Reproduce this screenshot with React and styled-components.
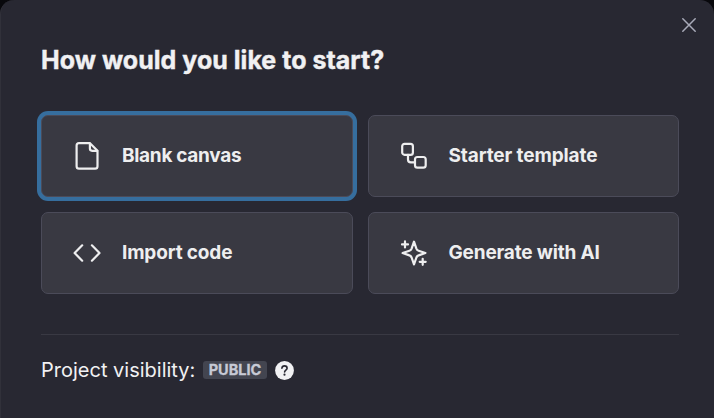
import React from "react";
import styled, { createGlobalStyle } from "styled-components";

const GlobalStyle = createGlobalStyle`
  * { box-sizing: border-box; }
  html, body { margin: 0; background: #08080c; overflow: hidden; }
  body { font-family: Inter, "Liberation Sans", sans-serif; }
`;

const Dialog = styled.section`
  position: relative;
  width: 714px;
  height: 418px;
  padding: 43px 34px 0 40px;
  border-left: 1px solid #31313a;
  border-radius: 14px 14px 0 0;
  background: #282832;
  color: #f1f1f3;
`;

const CloseButton = styled.button`
  position: absolute;
  top: 15px;
  right: 15px;
  width: 20px;
  height: 20px;
  padding: 0;
  border: 0;
  background: none;
  color: #a9abb9;
  svg { display: block; }
`;

const Title = styled.h1`
  margin: 0;
  font-size: 25px;
  line-height: 34px;
  font-weight: 700;
  letter-spacing: 0.02px;
  white-space: nowrap;
  -webkit-text-stroke: 0.4px currentColor;
`;

const Options = styled.div`
  display: grid;
  width: 638px;
  margin-top: 38px;
  grid-template-columns: 312px 311px;
  grid-auto-rows: 82px;
  gap: 15px;
`;

const Option = styled.button`
  display: flex;
  align-items: center;
  gap: ${({ $gap }) => $gap};
  padding: 0 0 0 29px;
  border: 1px solid #4b4b59;
  border-radius: 7px;
  background: #393942;
  color: #eeeeef;
  font: 700 19px/24px Inter, "Liberation Sans", sans-serif;
  letter-spacing: ${({ $tracking }) => $tracking};
  white-space: nowrap;
  outline: none;
  box-shadow: ${({ $selected }) => ($selected ? "0 0 0 4px #366e9e" : "none")};
  svg { flex: none; }
`;

const Footer = styled.footer`
  display: flex;
  align-items: center;
  width: 638px;
  height: 71px;
  margin-top: 40px;
  border-top: 1px solid #393943;
  font-size: 20px;
  line-height: 24px;
`;

const VisibilityLabel = styled.span`
  width: 162px;
  white-space: nowrap;
`;

const Badge = styled.span`
  display: flex;
  align-items: center;
  justify-content: center;
  width: 64px;
  height: 18px;
  border-radius: 3px;
  background: #434550;
  color: #c7cad5;
  font-size: 14.5px;
  line-height: 18px;
  font-weight: 700;
  -webkit-text-stroke: 0.3px currentColor;
`;

const Help = styled.span`
  display: flex;
  margin-left: 8px;
`;

const Icon = ({ children }) => (
  <svg width="32" height="32" viewBox="0 0 32 32" fill="none" stroke="currentColor" strokeWidth="2.2" strokeLinecap="round" strokeLinejoin="round">
    {children}
  </svg>
);

const FileIcon = () => (
  <Icon>
    <path d="M19 3.2H8Q5.6 3.2 5.6 5.6V26.2Q5.6 28.6 8 28.6H24.1Q26.5 28.6 26.5 26.2V10.7Z" />
    <path d="M18.9 3.5V8.6Q18.9 10.8 21.1 10.8H26.2" />
  </Icon>
);

const TemplateIcon = () => (
  <Icon>
    <rect x="4.2" y="3.9" width="10.7" height="10.9" rx="2.4" />
    <rect x="17" y="17" width="10.7" height="10.7" rx="2.4" />
    <path d="M10 14.9V19.6Q10 22.4 12.8 22.4H17" />
  </Icon>
);

const CodeIcon = () => (
  <Icon>
    <path d="M11.2 8.3 3.6 16l7.6 7.7M20.9 8.3l7.6 7.7-7.6 7.7" />
  </Icon>
);

const SparklesIcon = () => (
  <Icon>
    <path d="M16 4.7 18.4 11.6Q19 13.2 20.6 13.7L27.4 16 20.6 18.4Q19 18.9 18.4 20.5L16 27.4 13.6 20.5Q13 18.9 11.4 18.4L4.6 16 11.4 13.7Q13 13.2 13.6 11.6Z" />
    <path d="M7 4.4V10.4M4 7.4H10M24.7 21.8V27.8M21.7 24.8H27.7" />
  </Icon>
);

const options = [
  { label: "Blank canvas", icon: <FileIcon />, selected: true, gap: "19px", tracking: "-0.3px" },
  { label: "Starter template", icon: <TemplateIcon />, gap: "18.5px", tracking: "-0.11px" },
  { label: "Import code", icon: <CodeIcon />, gap: "19px", tracking: "-0.15px" },
  { label: "Generate with AI", icon: <SparklesIcon />, gap: "18.5px", tracking: "-0.17px" },
];

export default function App() {
  return (
    <>
      <GlobalStyle />
      <Dialog>
        <CloseButton aria-label="Close">
          <svg width="20" height="20" viewBox="0 0 20 20" fill="none" stroke="currentColor" strokeWidth="1.5" strokeLinecap="round">
            <path d="M3.8 3.8 16.2 16.2M16.2 3.8 3.8 16.2" />
          </svg>
        </CloseButton>
        <Title>How would you like to start?</Title>
        <Options>
          {options.map(({ label, icon, selected, gap, tracking }) => (
            <Option key={label} $selected={selected} $gap={gap} $tracking={tracking}>
              {icon}
              <span>{label}</span>
            </Option>
          ))}
        </Options>
        <Footer>
          <VisibilityLabel>Project visibility:</VisibilityLabel>
          <Badge>PUBLIC</Badge>
          <Help>
            <svg width="19" height="19" viewBox="0 0 19 19" fill="none">
              <circle cx="9.5" cy="9.5" r="9.4" fill="#f1f1f3" />
              <path d="M6.9 7.3C7 5.8 8 4.9 9.5 4.9s2.6.9 2.6 2.3c0 1.8-2.5 1.9-2.5 3.7" stroke="#282832" strokeWidth="1.6" strokeLinecap="round" />
              <circle cx="9.5" cy="13.7" r="1.1" fill="#282832" />
            </svg>
          </Help>
        </Footer>
      </Dialog>
    </>
  );
}
